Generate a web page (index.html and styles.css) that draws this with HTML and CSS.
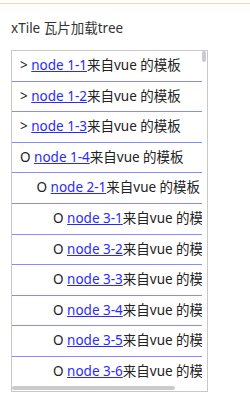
FILE: index.html
```html
<!DOCTYPE html>
<html lang="zh-CN">
<head>
    <meta charset="UTF-8">
    <meta name="viewport" content="width=device-width, initial-scale=1.0">
    <title>xTile 瓦片加载tree</title>
    <link rel="stylesheet" href="styles.css">
</head>
<body>
    <div class="topbar"></div>

    <div class="page">
        <h1 class="title">xTile 瓦片加载tree</h1>

        <div class="tree">
            <div class="tree-body">
                <div class="node level-1"><span class="mark">&gt;</span> <a href="#">node 1-1</a>来自vue 的模板</div>
                <div class="node level-1"><span class="mark">&gt;</span> <a href="#">node 1-2</a>来自vue 的模板</div>
                <div class="node level-1"><span class="mark">&gt;</span> <a href="#">node 1-3</a>来自vue 的模板</div>
                <div class="node level-1"><span class="mark">O</span> <a href="#">node 1-4</a>来自vue 的模板</div>
                <div class="node level-2"><span class="mark">O</span> <a href="#">node 2-1</a>来自vue 的模板</div>
                <div class="node level-3"><span class="mark">O</span> <a href="#">node 3-1</a>来自vue 的模板</div>
                <div class="node level-3"><span class="mark">O</span> <a href="#">node 3-2</a>来自vue 的模板</div>
                <div class="node level-3"><span class="mark">O</span> <a href="#">node 3-3</a>来自vue 的模板</div>
                <div class="node level-3"><span class="mark">O</span> <a href="#">node 3-4</a>来自vue 的模板</div>
                <div class="node level-3"><span class="mark">O</span> <a href="#">node 3-5</a>来自vue 的模板</div>
                <div class="node level-3"><span class="mark">O</span> <a href="#">node 3-6</a>来自vue 的模板</div>
                <div class="node level-3"><span class="mark">O</span> <a href="#">node 3-7</a>来自vue 的模板</div>
            </div>
            <!-- 自绘滚动条 -->
            <div class="vbar"><div class="vbar-thumb"></div></div>
            <div class="hbar"><div class="hbar-thumb"></div></div>
            <div class="corner"></div>
        </div>
    </div>
</body>
</html>
```

FILE: styles.css
```css
:root {
    --text-color: #222;
    --link-color: #2a2aff;
    --line-color: #8a8aff;
    --border-color: #c8c8c8;
    --thumb-color: #c9cbd1;
}

body {
    margin: 0;
    font-family: "Noto Sans", "Noto Sans CJK SC", sans-serif;
    font-size: 13.5px;
    color: var(--text-color);
    background-color: #fff;
}

.topbar {
    height: 3px;
    border-bottom: 1px solid #f6d6a6;
}

.page {
    padding: 0 11px;
}

.title {
    margin: 14px 0 12px;
    font-size: 13.5px;
    font-weight: 400;
    line-height: 20px;
    color: #333;
}

.tree {
    width: 195px;
    height: 340px;
    border: 1px solid var(--border-color);
    display: grid;
    grid-template-columns: 190px 5px;
    grid-template-rows: 335px 5px;
}

.tree-body {
    overflow: hidden;
}

.vbar-thumb {
    width: 4px;
    height: 11px;
    border-radius: 2px;
    background-color: var(--thumb-color);
}

.hbar-thumb {
    width: 163px;
    height: 4px;
    border-radius: 2px;
    background-color: var(--thumb-color);
}

.node {
    height: 29.6px;
    line-height: 29.6px;
    border-bottom: 1px solid var(--line-color);
    white-space: nowrap;
}

.node a {
    color: var(--link-color);
    text-decoration: underline;
}

.level-1 {
    padding-left: 8px;
}

.level-2 {
    padding-left: 24.5px;
}

.level-3 {
    padding-left: 41px;
}
```
